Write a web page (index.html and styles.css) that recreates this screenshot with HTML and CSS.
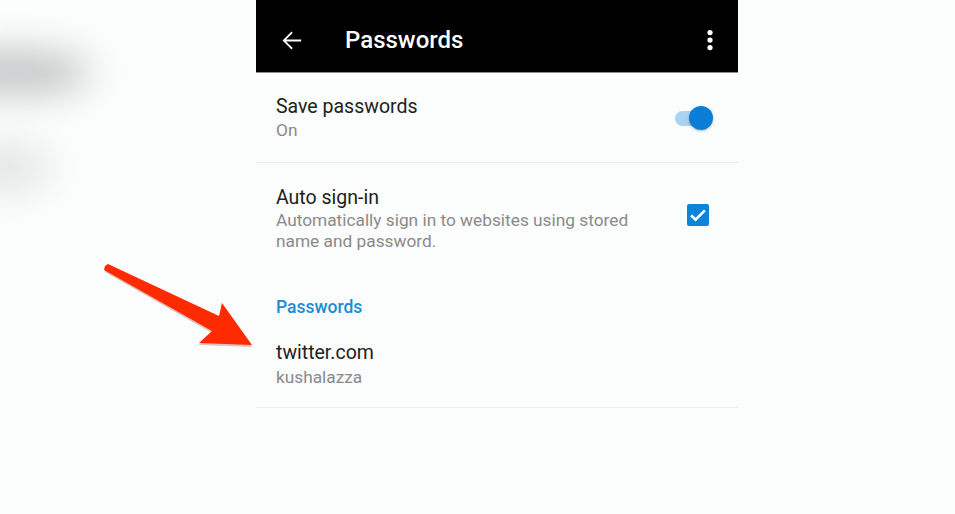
FILE: index.html
```html
<!DOCTYPE html>
<html>
<head>
    <title>Passwords</title>
    <link rel="stylesheet" href="styles.css">
</head>
<body>
<div class="blur blur-top"></div>
<div class="blur blur-bottom"></div>

<div class="screen">
    <div class="toolbar">
        <svg class="toolbar-back" viewBox="0 0 24 24" width="29" height="29">
            <path fill="#fff" d="M20 11.2H7.5l5.5-5.5L12 4.6l-7.4 7.4 7.4 7.4 1-1.1-5.5-5.5H20z"/>
        </svg>
        <h1 class="toolbar-title">Passwords</h1>
        <svg class="toolbar-menu" viewBox="0 0 24 24" width="30" height="30">
            <circle cx="12" cy="6" r="2.1" fill="#fff"/>
            <circle cx="12" cy="12" r="2.1" fill="#fff"/>
            <circle cx="12" cy="18" r="2.1" fill="#fff"/>
        </svg>
    </div>

    <div class="pref pref-save">
        <div class="pref-text">
            <div class="pref-title">Save passwords</div>
            <div class="pref-summary">On</div>
        </div>
        <div class="switch">
            <div class="switch-track"></div>
            <div class="switch-thumb"></div>
        </div>
    </div>

    <div class="pref pref-auto">
        <div class="pref-text">
            <div class="pref-title">Auto sign-in</div>
            <div class="pref-summary">Automatically sign in to websites using stored<br>name and password.</div>
        </div>
        <div class="checkbox">
            <svg viewBox="0 0 24 24" width="22" height="22">
                <path fill="none" stroke="#fff" stroke-width="2.8" d="M4.5 12.3l4.8 4.8 10.2-10.2"/>
            </svg>
        </div>
    </div>

    <div class="section-title">Passwords</div>

    <div class="pref pref-entry">
        <div class="pref-text">
            <div class="pref-title">twitter.com</div>
            <div class="pref-summary">kushalazza</div>
        </div>
    </div>
</div>

<svg class="pointer" width="955" height="514" viewBox="0 0 955 514">
    <polygon class="pointer-shadow" points="106,268 108,266 219,318 222,305 252,347 199,345 212,333 105,272"/>
    <polygon class="pointer-shape" points="105,266 108,264 219,316 222,303 252,345 199,343 212,331 104,270"/>
</svg>
</body>
</html>
```

FILE: styles.css
```css
body {
    margin: 0;
    background-color: #fbfcfc;
    font-family: Roboto, "Noto Sans", sans-serif;
    color: #212121;
    height: 514px;
    overflow: hidden;
}

.blur {
    position: absolute;
    border-radius: 50%;
    filter: blur(18px);
}

.blur-top {
    left: -60px;
    top: 50px;
    width: 150px;
    height: 45px;
    background-color: #c4c6c6;
}

.blur-bottom {
    left: -50px;
    top: 145px;
    width: 100px;
    height: 45px;
    background-color: #e2e4e4;
}

.screen {
    margin-left: 256px;
    width: 482px;
}

.toolbar {
    display: flex;
    align-items: center;
    height: 64px;
    padding-top: 8px;
    background-color: #000;
    border-bottom: 1px solid #8e8e8e;
}

.toolbar-back {
    margin-left: 21px;
}

.toolbar-title {
    margin: 0 0 0 39px;
    flex: 1;
    font-size: 24px;
    font-weight: 500;
    color: #fff;
}

.toolbar-menu {
    margin-right: 13px;
}

.pref {
    display: flex;
    align-items: center;
    padding: 0 25px 0 20px;
}

.pref-text {
    flex: 1;
}

.pref-title {
    font-size: 19.5px;
    line-height: 24px;
    color: #212121;
}

.pref-summary {
    font-size: 17.3px;
    line-height: 21px;
    color: #8a8a8a;
}

.pref-save {
    padding-top: 22px;
    padding-bottom: 21px;
    border-bottom: 1px solid #eceeee;
}

.pref-save .pref-summary {
    line-height: 22px;
}

.pref-auto {
    padding-top: 23px;
    padding-bottom: 20px;
}

.pref-entry {
    padding-top: 23px;
    padding-bottom: 19px;
    border-bottom: 1px solid #eceeee;
}

.pref-entry .pref-summary {
    margin-top: 1px;
    line-height: 22px;
}

.switch {
    position: relative;
    width: 38px;
    height: 24px;
}

.switch-track {
    position: absolute;
    left: 0;
    top: 5px;
    width: 34px;
    height: 15px;
    border-radius: 8px;
    background-color: #a9d3f1;
}

.switch-thumb {
    position: absolute;
    right: 0;
    top: 0;
    width: 24px;
    height: 24px;
    border-radius: 50%;
    background-color: #0a7dd6;
    box-shadow: 0 1px 3px rgba(0, 0, 0, 0.25);
}

.checkbox {
    width: 22px;
    height: 22px;
    margin: 0 4px 8px 0;
    border-radius: 2px;
    background-color: #0b84d9;
}

.checkbox svg {
    display: block;
}

.section-title {
    padding: 24px 20px 0;
    font-size: 17.5px;
    line-height: 22px;
    font-weight: 500;
    color: #1a8bd5;
}

.pointer {
    position: absolute;
    left: 0;
    top: 0;
}

.pointer-shadow {
    fill: rgba(120, 20, 0, 0.25);
}

.pointer-shape {
    fill: #ff2b00;
}
```
